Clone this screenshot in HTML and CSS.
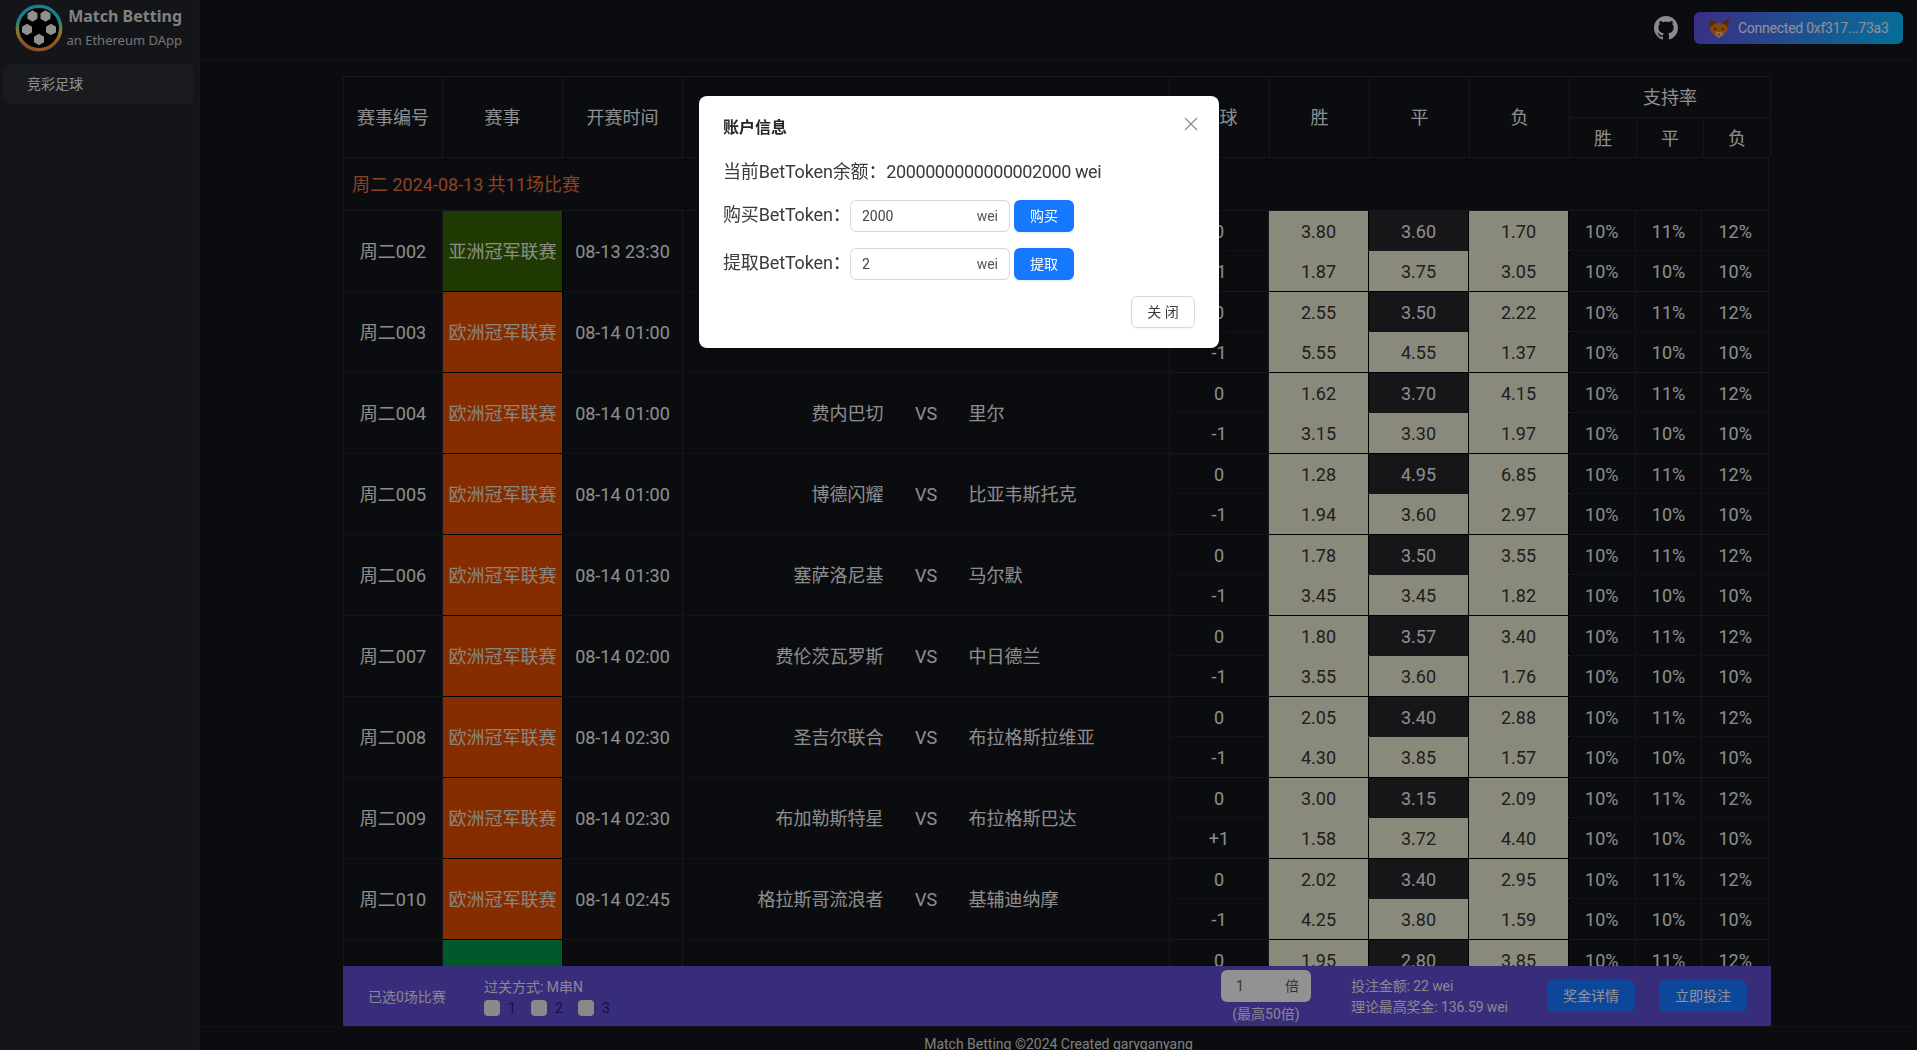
FILE: index.html
```html
<!doctype html>
<html>
<head>
<meta charset="utf-8">
<title>Match Betting</title>
<link rel="stylesheet" href="styles.css">
</head>
<body>
<div class="app">
	<aside class="side">
		<div class="logo">
			<svg class="logo-img" width="48" height="48" viewBox="0 0 48 48">
				<defs>
					<linearGradient id="ring" x1="0" y1="0" x2="0" y2="1">
						<stop offset="0.3" stop-color="#2fd0f0"/>
						<stop offset="0.45" stop-color="#7fd0a0"/>
						<stop offset="0.58" stop-color="#f2c84a"/>
						<stop offset="0.85" stop-color="#f08a40"/>
					</linearGradient>
					<path id="patch" d="M0-5L4.300-2.500V2.500L0 5-4.300 2.500V-2.500z" fill="#f0f0f0" stroke="#f0f0f0" stroke-width="1.400" stroke-linejoin="round"/>
				</defs>
				<circle cx="24" cy="24" r="23.500" fill="#000"/>
				<circle cx="24" cy="24" r="21.700" fill="none" stroke="url(#ring)" stroke-width="3.500"/>
				<use href="#patch" x="17.500" y="12"/>
				<use href="#patch" x="30.500" y="12"/>
				<use href="#patch" x="12" y="25.500"/>
				<use href="#patch" x="36" y="25.500"/>
				<use href="#patch" x="24" y="35.500"/>
			</svg>
			<div class="logo-text">
				<div class="logo-name">Match Betting</div>
				<div class="logo-sub">an Ethereum DApp</div>
			</div>
		</div>
		<div class="menu-item">竞彩足球</div>
	</aside>

	<div class="main">
		<header class="top">
			<svg class="github" width="24" height="24" viewBox="0 0 16 16"><path fill="#e8e8e8" d="M8 0C3.58 0 0 3.58 0 8c0 3.54 2.29 6.53 5.47 7.59.4.07.55-.17.55-.38 0-.19-.01-.82-.01-1.49-2.01.37-2.53-.49-2.69-.94-.09-.23-.48-.94-.82-1.13-.28-.15-.68-.52-.01-.53.63-.01 1.08.58 1.23.82.72 1.21 1.87.87 2.33.66.07-.52.28-.87.51-1.07-1.78-.2-3.64-.89-3.64-3.95 0-.87.31-1.59.82-2.15-.08-.2-.36-1.02.08-2.12 0 0 .67-.21 2.2.82.64-.18 1.32-.27 2-.27.68 0 1.36.09 2 .27 1.53-1.04 2.2-.82 2.2-.82.44 1.1.16 1.92.08 2.12.51.56.82 1.27.82 2.15 0 3.07-1.87 3.75-3.65 3.95.29.25.54.73.54 1.48 0 1.07-.01 1.93-.01 2.2 0 .21.15.46.55.38A8.013 8.013 0 0016 8c0-4.42-3.58-8-8-8z"/></svg>
			<div class="connect">
				<svg width="22" height="20" viewBox="0 0 22 20">
					<path fill="#8a4a18" d="M1 0l8 5h4l8-5-1 10-1 3-4 4h-8l-4-4-1-3z"/>
					<path fill="#e2761b" d="M3 8l6-3h4l6 3 1 4-3 4-3 2h-6l-3-2-3-4z"/>
					<path fill="#f6b07c" d="M8 14h6l1 3-4 3-4-3z"/>
					<path fill="#2a1a10" d="M6 10l3 1-2 1zM16 10l-3 1 2 1zM10 16h2l-1 1.500z"/>
				</svg>
				<span>Connected 0xf317...73a3</span>
			</div>
		</header>

		<div class="board">
			<table class="tb tb-head">
				<colgroup>
					<col class="c-no"><col class="c-lg"><col class="c-tm"><col class="c-vs"><col class="c-hc"><col class="c-od"><col class="c-od"><col class="c-od"><col class="c-hr"><col class="c-hr"><col class="c-hr">
				</colgroup>
				<tr class="h1">
					<th rowspan="2">赛事编号</th><th rowspan="2">赛事</th><th rowspan="2">开赛时间</th><th rowspan="2">对阵</th><th rowspan="2">让球</th><th rowspan="2">胜</th><th rowspan="2">平</th><th rowspan="2">负</th><th colspan="3" class="rate">支持率</th>
				</tr>
				<tr class="h2"><th>胜</th><th>平</th><th>负</th></tr>
			</table>

			<table class="tb tb-body">
				<colgroup>
					<col class="c-no"><col class="c-lg"><col class="c-tm"><col class="c-vs"><col class="c-hc2"><col class="c-od"><col class="c-od"><col class="c-od"><col class="c-r"><col class="c-r"><col class="c-r">
				</colgroup>
				<tr class="date-row"><td colspan="11">周二 2024-08-13 共11场比赛</td></tr>

				<tr class="a"><td rowspan="2">周二002</td><td rowspan="2" class="lg asia">亚洲冠军联赛</td><td rowspan="2">08-13 23:30</td><td rowspan="2"></td><td>0</td><td class="on">3.80</td><td class="off">3.60</td><td class="on">1.70</td><td>10%</td><td>11%</td><td>12%</td></tr>
				<tr class="b"><td>-1</td><td class="on">1.87</td><td class="on">3.75</td><td class="on">3.05</td><td>10%</td><td>10%</td><td>10%</td></tr>

				<tr class="a"><td rowspan="2">周二003</td><td rowspan="2" class="lg euro">欧洲冠军联赛</td><td rowspan="2">08-14 01:00</td><td rowspan="2"></td><td>0</td><td class="on">2.55</td><td class="off">3.50</td><td class="on">2.22</td><td>10%</td><td>11%</td><td>12%</td></tr>
				<tr class="b"><td>-1</td><td class="on">5.55</td><td class="on">4.55</td><td class="on">1.37</td><td>10%</td><td>10%</td><td>10%</td></tr>

				<tr class="a"><td rowspan="2">周二004</td><td rowspan="2" class="lg euro">欧洲冠军联赛</td><td rowspan="2">08-14 01:00</td><td rowspan="2"><div class="vs"><span>费内巴切</span><span>VS</span><span>里尔</span></div></td><td>0</td><td class="on">1.62</td><td class="off">3.70</td><td class="on">4.15</td><td>10%</td><td>11%</td><td>12%</td></tr>
				<tr class="b"><td>-1</td><td class="on">3.15</td><td class="on">3.30</td><td class="on">1.97</td><td>10%</td><td>10%</td><td>10%</td></tr>

				<tr class="a"><td rowspan="2">周二005</td><td rowspan="2" class="lg euro">欧洲冠军联赛</td><td rowspan="2">08-14 01:00</td><td rowspan="2"><div class="vs"><span>博德闪耀</span><span>VS</span><span>比亚韦斯托克</span></div></td><td>0</td><td class="on">1.28</td><td class="off">4.95</td><td class="on">6.85</td><td>10%</td><td>11%</td><td>12%</td></tr>
				<tr class="b"><td>-1</td><td class="on">1.94</td><td class="on">3.60</td><td class="on">2.97</td><td>10%</td><td>10%</td><td>10%</td></tr>

				<tr class="a"><td rowspan="2">周二006</td><td rowspan="2" class="lg euro">欧洲冠军联赛</td><td rowspan="2">08-14 01:30</td><td rowspan="2"><div class="vs"><span>塞萨洛尼基</span><span>VS</span><span>马尔默</span></div></td><td>0</td><td class="on">1.78</td><td class="off">3.50</td><td class="on">3.55</td><td>10%</td><td>11%</td><td>12%</td></tr>
				<tr class="b"><td>-1</td><td class="on">3.45</td><td class="on">3.45</td><td class="on">1.82</td><td>10%</td><td>10%</td><td>10%</td></tr>

				<tr class="a"><td rowspan="2">周二007</td><td rowspan="2" class="lg euro">欧洲冠军联赛</td><td rowspan="2">08-14 02:00</td><td rowspan="2"><div class="vs"><span>费伦茨瓦罗斯</span><span>VS</span><span>中日德兰</span></div></td><td>0</td><td class="on">1.80</td><td class="off">3.57</td><td class="on">3.40</td><td>10%</td><td>11%</td><td>12%</td></tr>
				<tr class="b"><td>-1</td><td class="on">3.55</td><td class="on">3.60</td><td class="on">1.76</td><td>10%</td><td>10%</td><td>10%</td></tr>

				<tr class="a"><td rowspan="2">周二008</td><td rowspan="2" class="lg euro">欧洲冠军联赛</td><td rowspan="2">08-14 02:30</td><td rowspan="2"><div class="vs"><span>圣吉尔联合</span><span>VS</span><span>布拉格斯拉维亚</span></div></td><td>0</td><td class="on">2.05</td><td class="off">3.40</td><td class="on">2.88</td><td>10%</td><td>11%</td><td>12%</td></tr>
				<tr class="b"><td>-1</td><td class="on">4.30</td><td class="on">3.85</td><td class="on">1.57</td><td>10%</td><td>10%</td><td>10%</td></tr>

				<tr class="a"><td rowspan="2">周二009</td><td rowspan="2" class="lg euro">欧洲冠军联赛</td><td rowspan="2">08-14 02:30</td><td rowspan="2"><div class="vs"><span>布加勒斯特星</span><span>VS</span><span>布拉格斯巴达</span></div></td><td>0</td><td class="on">3.00</td><td class="off">3.15</td><td class="on">2.09</td><td>10%</td><td>11%</td><td>12%</td></tr>
				<tr class="b"><td>+1</td><td class="on">1.58</td><td class="on">3.72</td><td class="on">4.40</td><td>10%</td><td>10%</td><td>10%</td></tr>

				<tr class="a"><td rowspan="2">周二010</td><td rowspan="2" class="lg euro">欧洲冠军联赛</td><td rowspan="2">08-14 02:45</td><td rowspan="2"><div class="vs"><span>格拉斯哥流浪者</span><span>VS</span><span>基辅迪纳摩</span></div></td><td>0</td><td class="on">2.02</td><td class="off">3.40</td><td class="on">2.95</td><td>10%</td><td>11%</td><td>12%</td></tr>
				<tr class="b"><td>-1</td><td class="on">4.25</td><td class="on">3.80</td><td class="on">1.59</td><td>10%</td><td>10%</td><td>10%</td></tr>

				<tr class="a"><td rowspan="2"></td><td rowspan="2" class="lg other"></td><td rowspan="2"></td><td rowspan="2"></td><td>0</td><td class="on">1.95</td><td class="off">2.80</td><td class="on">3.85</td><td>10%</td><td>11%</td><td>12%</td></tr>
			</table>
		</div>

		<div class="bet-bar">
			<div class="picked">已选0场比赛</div>
			<div class="pass">
				<div>过关方式: M串N</div>
				<div class="pass-opts">
					<label><i></i>1</label>
					<label><i></i>2</label>
					<label><i></i>3</label>
				</div>
			</div>
			<div class="times">
				<div class="times-box"><span>1</span><span>倍</span></div>
				<div>(最高50倍)</div>
			</div>
			<div class="money">
				<div>投注金额: 22 wei</div>
				<div>理论最高奖金: 136.59 wei</div>
			</div>
			<div class="bar-btn first">奖金详情</div>
			<div class="bar-btn">立即投注</div>
		</div>

		<footer class="foot">Match Betting ©2024 Created garyganyang</footer>
	</div>
</div>

<div class="mask"></div>
<div class="modal">
	<svg class="modal-x" width="14" height="14" viewBox="0 0 14 14"><path d="M1 1l12 12M13 1L1 13" stroke="#8c8c8c" stroke-width="1.200"/></svg>
	<div class="modal-title">账户信息</div>
	<div class="modal-line">当前BetToken余额：<span>2000000000000002000 wei</span></div>
	<div class="modal-form">
		<span class="form-label">购买BetToken：</span>
		<div class="num-box"><span>2000</span><span class="unit">wei</span></div>
		<div class="blue-btn">购买</div>
	</div>
	<div class="modal-form">
		<span class="form-label">提取BetToken：</span>
		<div class="num-box"><span>2</span><span class="unit">wei</span></div>
		<div class="blue-btn">提取</div>
	</div>
	<div class="modal-foot"><div class="close-btn">关 闭</div></div>
</div>
</body>
</html>
```

FILE: styles.css
```css
*{box-sizing:border-box;}
html,body{height:100%;margin:0;overflow:hidden;}
body{background:#121419;color:#ebebeb;font-family:Roboto,"Noto Sans CJK SC",sans-serif;font-size:14px;}
.app{display:flex;height:1050px;}

/* side */
.side{width:200px;flex:none;background:#212328;border-right:1px solid #26282d;padding:0 5px 0 3px;}
.logo{display:flex;height:60px;align-items:center;margin-left:12px;}
.logo-img{flex:none;margin-top:-4px;}
.logo-text{text-align:right;margin-left:-2px;width:121px;flex:none;white-space:nowrap;font-family:"Noto Sans",sans-serif;}
.logo-name{font-size:16px;font-weight:700;line-height:24px;color:#d8d8d8;margin-top:-4px;}
.logo-sub{font-size:13px;line-height:24px;color:#c4c4c4;}
.menu-item{height:40px;line-height:40px;margin-top:4px;padding-left:24px;border-radius:8px;background:#2b2d32;}

/* main */
.main{flex:1;min-width:0;display:flex;flex-direction:column;}
.top{height:60px;flex:none;display:flex;align-items:center;justify-content:flex-end;padding-right:14px;border-bottom:1px solid #1f2126;}
.github{margin-right:16px;margin-top:-3px;}
.connect{width:209px;height:32px;margin-top:-4px;border-radius:6px;display:flex;align-items:center;padding-left:14px;background:linear-gradient(100deg,#614fde,#08b9ff);}
.connect span{margin-left:8px;color:#f0f0ff;font-size:14px;white-space:nowrap;letter-spacing:-.25px;}

.board{height:906px;flex:none;overflow:hidden;padding:16px 0 0 143px;}
.tb{border-collapse:separate;border-spacing:0;table-layout:fixed;font-size:18px;line-height:24px;text-align:center;border-left:1px solid #26282d;}
.tb-head{width:1428px;border-top:1px solid #26282d;}
.tb-body{width:1426px;}
.c-no{width:99px;}
.c-lg{width:120px;}
.c-tm{width:120px;}
.c-vs{width:487px;}
.c-hc{width:100px;}
.c-hc2{width:99px;}
.c-od{width:100px;}
.c-hr{width:67px;}
.c-r{width:66.667px;}
.tb th,.tb td{padding:2px 0 0;font-weight:400;border-right:1px solid #26282d;border-bottom:1px solid #26282d;}
.h1 th{height:41px;}
.h2 th{height:40px;}
.h1 .rate{padding-bottom:1px;}
.date-row td{height:53px;text-align:left;padding-left:8px;color:#e67040;}
.a td{height:40px;border-bottom-color:#1e2025;}
.b td{height:41px;}
.lg{background-clip:padding-box;border-color:#000 !important;}
.asia{background:#336003;color:#eaeadb;}
.euro{background:#e04c00;color:#eadcd0;}
.other{background:#009449;}
.tb .on{background:#e6e6cf;color:#343430;border-right-color:#000;border-bottom-color:transparent;}
.tb .off{background:#25262b;border-right-color:#000;border-bottom-color:transparent;}
.tb .b .on,.tb .b .off{border-bottom-color:#000;}
.vs{display:grid;grid-template-columns:1fr 85px 1fr;}
.vs span:first-child{text-align:right;}
.vs span:last-child{text-align:left;}

/* bottom bar */
.bet-bar{height:60px;flex:none;width:1428px;margin-left:143px;background:#5c4bcb;color:#e6dff5;display:flex;align-items:center;}
.picked{width:141px;padding-left:25px;}
.pass{line-height:22px;margin-top:2px;}
.pass-opts{display:flex;height:20px;align-items:center;}
.pass-opts label{display:flex;align-items:center;width:47px;color:#221c70;}
.pass-opts i{width:16px;height:16px;border-radius:4px;background:#e4e4e4;margin-right:8px;}
.times{margin-left:596px;width:90px;text-align:center;line-height:22px;margin-top:3px;}
.times-box{height:32px;border-radius:6px;background:#f4f4f4;color:#555;display:flex;justify-content:space-between;align-items:center;padding:0 12px 0 15px;margin-bottom:1px;}
.money{margin-left:40px;width:196px;line-height:21px;margin-top:2px;letter-spacing:-.1px;}
.bar-btn{width:88px;height:32px;line-height:32px;text-align:center;border-radius:6px;background:#1677ff;color:#f0f4ff;margin-left:24px;}
.bar-btn.first{margin-left:0;}
.foot{height:24px;flex:none;border-top:1px solid #1f2126;padding-top:7px;line-height:20px;text-align:center;color:#d4d4d4;}

/* over the page */
.mask{position:fixed;left:0;top:0;right:0;bottom:0;background:rgba(0,0,0,.4);}
.modal{position:fixed;left:699px;top:96px;width:520px;height:252px;background:#fff;border-radius:8px;padding:20px 24px;color:#3a3a3a;box-shadow:0 6px 16px rgba(0,0,0,.08);}
.modal-x{position:absolute;right:21px;top:21px;}
.modal-title{font-size:16px;font-weight:600;line-height:24px;color:#262626;}
.modal-line{font-size:18px;line-height:24px;margin-top:20px;letter-spacing:-.15px;}
.modal-line span{letter-spacing:-.4px;}
.modal-form{display:flex;align-items:center;height:32px;font-size:18px;margin-top:16px;}
.modal-line + .modal-form{margin-top:16px;}
.form-label{width:127px;white-space:nowrap;line-height:24px;padding-bottom:3px;letter-spacing:-.15px;}
.num-box{width:160px;height:32px;border:1px solid #d9d9d9;border-radius:6px;display:flex;justify-content:space-between;align-items:center;padding:0 11px;font-size:14px;color:#444;}
.unit{color:#555;}
.blue-btn{width:60px;height:32px;line-height:32px;margin-left:4px;border-radius:6px;background:#1677ff;color:#fff;text-align:center;font-size:14px;box-shadow:0 2px 0 rgba(5,145,255,.1);}
.modal-foot{display:flex;justify-content:flex-end;margin-top:16px;}
.close-btn{width:64px;height:32px;line-height:30px;text-align:center;border:1px solid #d9d9d9;border-radius:6px;font-size:14px;box-shadow:0 2px 0 rgba(0,0,0,.02);}
```
